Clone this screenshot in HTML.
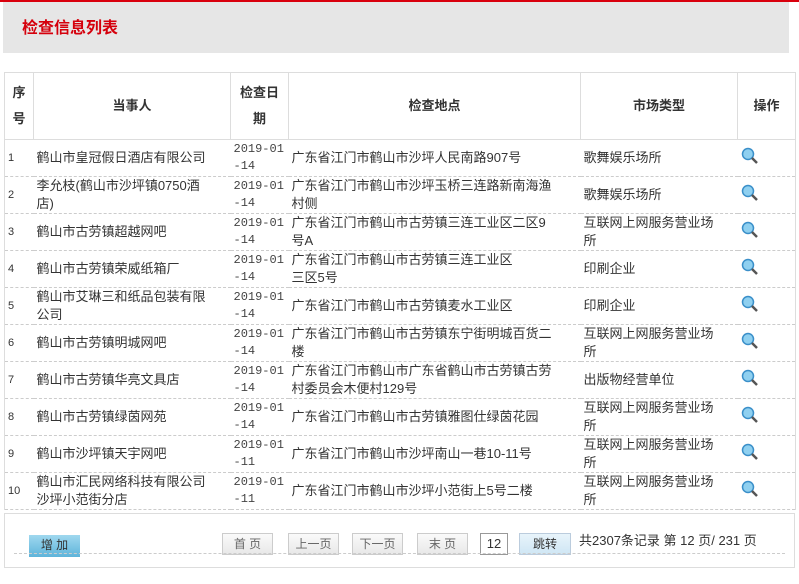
<!DOCTYPE html>
<html><head><meta charset="utf-8"><style>
*{margin:0;padding:0;box-sizing:border-box}
body{width:799px;height:584px;background:#fff;font-family:"Liberation Sans","Noto Sans CJK SC",sans-serif;font-size:13px;color:#333;position:relative;overflow:hidden}
.top{position:absolute;left:0;top:0;width:799px;height:2px;background:#d9000d}
.band{position:absolute;left:3px;top:2px;width:786px;height:51px;background:#e6e6e6}
.band h1{position:absolute;left:19px;top:17px;font-size:16px;color:#d5000c;font-weight:bold;line-height:20px}
table{position:absolute;left:4px;top:72px;border-collapse:collapse;table-layout:fixed;width:791px}
th{height:67px;border:1px solid #ddd;font-weight:bold;font-size:13px;color:#333;line-height:26px;text-align:center}
td{height:37px;border-bottom:1px dashed #ccc;line-height:18px;vertical-align:middle;padding-left:3px;font-size:13px}
td.n{font-size:11px;padding-left:3px}
td.d{font-family:"Liberation Mono","DejaVu Sans Mono",monospace;font-size:12px;padding-left:3px;color:#444;line-height:17px;vertical-align:top;padding-top:1px}
tr td:first-child{border-left:1px solid #ddd}
tr td:last-child{border-right:1px solid #ddd}
.ic{display:inline-block;position:relative;width:16px;height:16px;margin-left:0}
.pg{position:absolute;left:4px;top:513px;width:791px;height:55px;border:1px solid #ddd}
.pgl{position:absolute;left:9px;right:9px;top:39px;border-top:1px dashed #ccc}
.b{position:absolute;top:19px;height:22px;border:1px solid #ccc;background:linear-gradient(#fafafa,#e8e8e8);color:#666;font-size:12px;text-align:center;line-height:20px}
</style></head><body>
<div class="top"></div>
<div class="band"><h1>检查信息列表</h1></div>
<table>
<colgroup><col style="width:29px"><col style="width:197px"><col style="width:58px"><col style="width:292px"><col style="width:157px"><col style="width:58px"></colgroup>
<tr><th>序<br>号</th><th>当事人</th><th>检查日<br>期</th><th>检查地点</th><th>市场类型</th><th>操作</th></tr>
<tr><td class="n">1</td><td>鹤山市皇冠假日酒店有限公司</td><td class="d">2019-01<br>-14</td><td>广东省江门市鹤山市沙坪人民南路907号</td><td>歌舞娱乐场所</td><td><span class="ic"><svg width="18" height="18"><circle cx="7" cy="7" r="5.5" fill="#8fd0f0" stroke="#3a8fc9" stroke-width="1.5"/><line x1="11" y1="11" x2="16" y2="16" stroke="#555" stroke-width="2.5"/></svg></span></td></tr>
<tr><td class="n">2</td><td>李允枝(鹤山市沙坪镇0750酒<br>店)</td><td class="d">2019-01<br>-14</td><td>广东省江门市鹤山市沙坪玉桥三连路新南海渔<br>村侧</td><td>歌舞娱乐场所</td><td><span class="ic"><svg width="18" height="18"><circle cx="7" cy="7" r="5.5" fill="#8fd0f0" stroke="#3a8fc9" stroke-width="1.5"/><line x1="11" y1="11" x2="16" y2="16" stroke="#555" stroke-width="2.5"/></svg></span></td></tr>
<tr><td class="n">3</td><td>鹤山市古劳镇超越网吧</td><td class="d">2019-01<br>-14</td><td>广东省江门市鹤山市古劳镇三连工业区二区9<br>号A</td><td>互联网上网服务营业场<br>所</td><td><span class="ic"><svg width="18" height="18"><circle cx="7" cy="7" r="5.5" fill="#8fd0f0" stroke="#3a8fc9" stroke-width="1.5"/><line x1="11" y1="11" x2="16" y2="16" stroke="#555" stroke-width="2.5"/></svg></span></td></tr>
<tr><td class="n">4</td><td>鹤山市古劳镇荣威纸箱厂</td><td class="d">2019-01<br>-14</td><td>广东省江门市鹤山市古劳镇三连工业区<br>三区5号</td><td>印刷企业</td><td><span class="ic"><svg width="18" height="18"><circle cx="7" cy="7" r="5.5" fill="#8fd0f0" stroke="#3a8fc9" stroke-width="1.5"/><line x1="11" y1="11" x2="16" y2="16" stroke="#555" stroke-width="2.5"/></svg></span></td></tr>
<tr><td class="n">5</td><td>鹤山市艾琳三和纸品包装有限<br>公司</td><td class="d">2019-01<br>-14</td><td>广东省江门市鹤山市古劳镇麦水工业区</td><td>印刷企业</td><td><span class="ic"><svg width="18" height="18"><circle cx="7" cy="7" r="5.5" fill="#8fd0f0" stroke="#3a8fc9" stroke-width="1.5"/><line x1="11" y1="11" x2="16" y2="16" stroke="#555" stroke-width="2.5"/></svg></span></td></tr>
<tr><td class="n">6</td><td>鹤山市古劳镇明城网吧</td><td class="d">2019-01<br>-14</td><td>广东省江门市鹤山市古劳镇东宁街明城百货二<br>楼</td><td>互联网上网服务营业场<br>所</td><td><span class="ic"><svg width="18" height="18"><circle cx="7" cy="7" r="5.5" fill="#8fd0f0" stroke="#3a8fc9" stroke-width="1.5"/><line x1="11" y1="11" x2="16" y2="16" stroke="#555" stroke-width="2.5"/></svg></span></td></tr>
<tr><td class="n">7</td><td>鹤山市古劳镇华亮文具店</td><td class="d">2019-01<br>-14</td><td>广东省江门市鹤山市广东省鹤山市古劳镇古劳<br>村委员会木便村129号</td><td>出版物经营单位</td><td><span class="ic"><svg width="18" height="18"><circle cx="7" cy="7" r="5.5" fill="#8fd0f0" stroke="#3a8fc9" stroke-width="1.5"/><line x1="11" y1="11" x2="16" y2="16" stroke="#555" stroke-width="2.5"/></svg></span></td></tr>
<tr><td class="n">8</td><td>鹤山市古劳镇绿茵网苑</td><td class="d">2019-01<br>-14</td><td>广东省江门市鹤山市古劳镇雅图仕绿茵花园</td><td>互联网上网服务营业场<br>所</td><td><span class="ic"><svg width="18" height="18"><circle cx="7" cy="7" r="5.5" fill="#8fd0f0" stroke="#3a8fc9" stroke-width="1.5"/><line x1="11" y1="11" x2="16" y2="16" stroke="#555" stroke-width="2.5"/></svg></span></td></tr>
<tr><td class="n">9</td><td>鹤山市沙坪镇天宇网吧</td><td class="d">2019-01<br>-11</td><td>广东省江门市鹤山市沙坪南山一巷10-11号</td><td>互联网上网服务营业场<br>所</td><td><span class="ic"><svg width="18" height="18"><circle cx="7" cy="7" r="5.5" fill="#8fd0f0" stroke="#3a8fc9" stroke-width="1.5"/><line x1="11" y1="11" x2="16" y2="16" stroke="#555" stroke-width="2.5"/></svg></span></td></tr>
<tr><td class="n">10</td><td>鹤山市汇民网络科技有限公司<br>沙坪小范街分店</td><td class="d">2019-01<br>-11</td><td>广东省江门市鹤山市沙坪小范街上5号二楼</td><td>互联网上网服务营业场<br>所</td><td><span class="ic"><svg width="18" height="18"><circle cx="7" cy="7" r="5.5" fill="#8fd0f0" stroke="#3a8fc9" stroke-width="1.5"/><line x1="11" y1="11" x2="16" y2="16" stroke="#555" stroke-width="2.5"/></svg></span></td></tr>
</table>
<div class="pg">
<div class="b" style="left:24px;top:21px;width:51px;border:none;background:linear-gradient(#9fd8ef,#5eb4da);color:#333">增 加</div>
<div class="b" style="left:217px;width:51px">首 页</div>
<div class="b" style="left:283px;width:51px">上一页</div>
<div class="b" style="left:347px;width:51px">下一页</div>
<div class="b" style="left:412px;width:51px">末 页</div>
<div class="b" style="left:475px;width:28px;background:#fff;border-color:#999;color:#333;font-size:13px">12</div>
<div class="b" style="left:514px;width:52px;background:linear-gradient(#e8f4fb,#cfe6f4);border-color:#bcd;color:#333">跳转</div>
<div style="position:absolute;left:574px;top:17px;font-size:13px;color:#333;line-height:20px">共2307条记录 第 12 页/ 231 页</div>
<div class="pgl"></div>
</div>
</body></html>
